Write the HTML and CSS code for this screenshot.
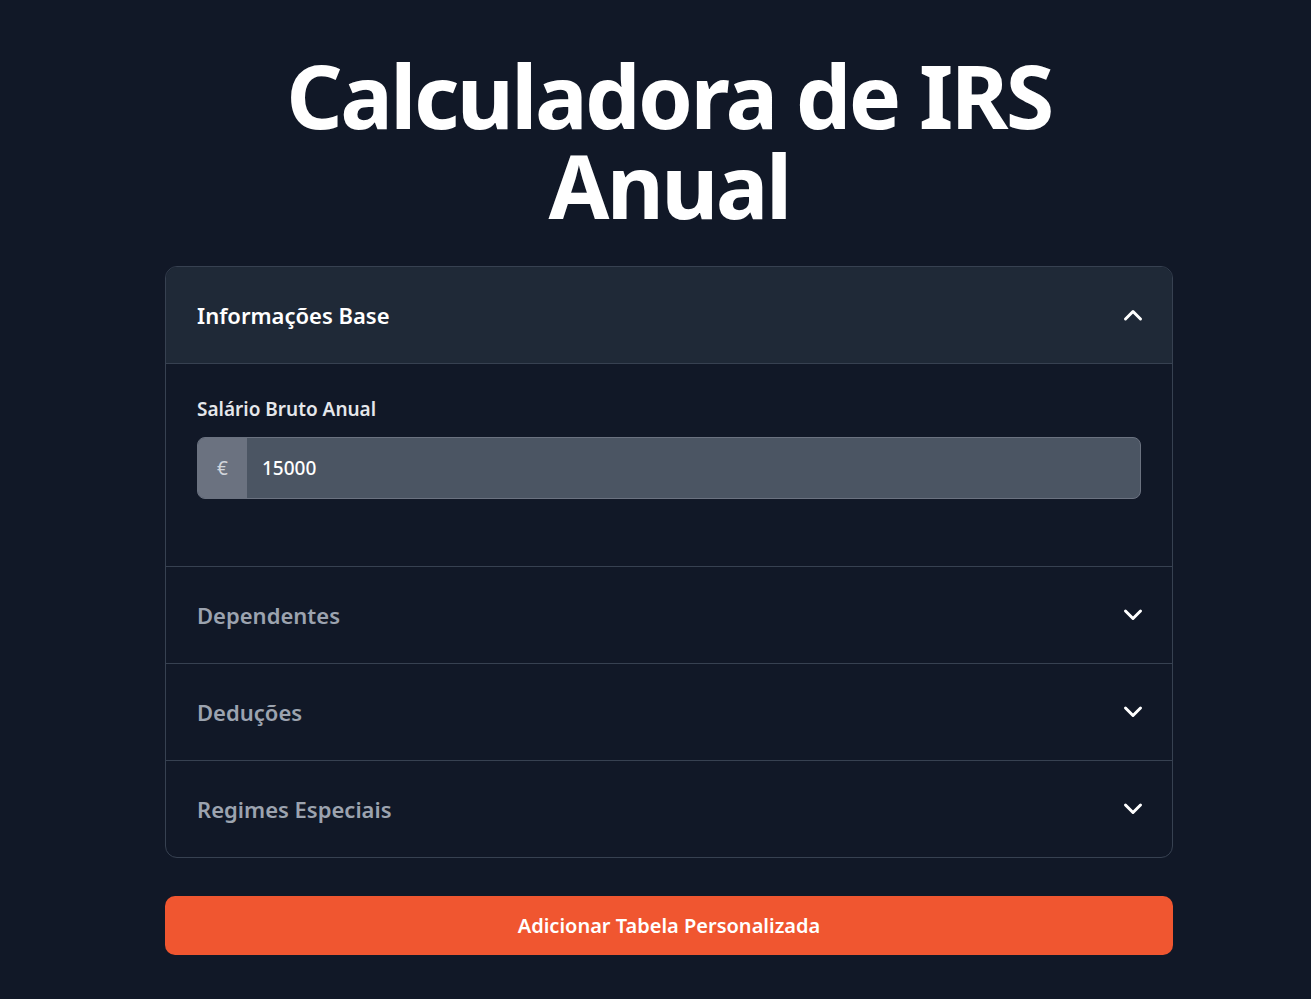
FILE: index.html
```html
<!DOCTYPE html>
<html lang="pt">
<head>
<meta charset="utf-8">
<title>Calculadora de IRS Anual</title>
<link rel="stylesheet" href="styles.css">
</head>
<body>
<main class="page">
  <h1 class="title">Calculadora de IRS<br>Anual</h1>
  <section class="accordion">
    <div class="acc-item open">
      <button class="acc-header">
        <span>Informações Base</span>
        <svg class="chev" viewBox="0 0 20 14" width="20" height="14"><path d="M2.5 11L10 3.5 17.5 11" fill="none" stroke="currentColor" stroke-width="3" stroke-linecap="round" stroke-linejoin="round"/></svg>
      </button>
      <div class="acc-body">
        <label class="field-label">Salário Bruto Anual</label>
        <div class="input-group">
          <span class="prefix">€</span>
          <span class="input">15000</span>
        </div>
      </div>
    </div>
    <div class="acc-item">
      <button class="acc-header">
        <span>Dependentes</span>
        <svg class="chev" viewBox="0 0 20 14" width="20" height="14"><path d="M2.5 3L10 10.5 17.5 3" fill="none" stroke="currentColor" stroke-width="3" stroke-linecap="round" stroke-linejoin="round"/></svg>
      </button>
    </div>
    <div class="acc-item">
      <button class="acc-header">
        <span>Deduções</span>
        <svg class="chev" viewBox="0 0 20 14" width="20" height="14"><path d="M2.5 3L10 10.5 17.5 3" fill="none" stroke="currentColor" stroke-width="3" stroke-linecap="round" stroke-linejoin="round"/></svg>
      </button>
    </div>
    <div class="acc-item">
      <button class="acc-header">
        <span>Regimes Especiais</span>
        <svg class="chev" viewBox="0 0 20 14" width="20" height="14"><path d="M2.5 3L10 10.5 17.5 3" fill="none" stroke="currentColor" stroke-width="3" stroke-linecap="round" stroke-linejoin="round"/></svg>
      </button>
    </div>
  </section>
  <button class="cta">Adicionar Tabela Personalizada</button>
</main>
</body>
</html>
```
FILE: styles.css
```css
* { box-sizing: border-box; }
html, body { margin: 0; padding: 0; background: #111827; }
body { font-family: "Noto Sans", "Open Sans", sans-serif; color: #fff; }
.page {
  width: 1008px;
  margin-left: 165px;
  padding-top: 50px;
  display: flex;
  flex-direction: column;
}
.title {
  margin: 0 0 36px;
  text-align: center;
  font-size: 88px;
  line-height: 90px;
  font-weight: 700;
  letter-spacing: -2.6px;
}
.accordion {
  border: 1px solid #374151;
  border-radius: 12px;
  overflow: hidden;
}
.acc-item + .acc-item { border-top: 1px solid #374151; }
.acc-header {
  width: 100%;
  height: 96px;
  display: flex;
  align-items: center;
  justify-content: space-between;
  padding: 0 29px 0 31px;
  background: transparent;
  border: 0;
  font-family: inherit;
  font-size: 22px;
  font-weight: 600;
  color: #9ca3af;
  text-align: left;
}
.acc-item.open .acc-header {
  background: #1f2937;
  color: #fff;
  border-bottom: 1px solid #374151;
  height: 97px;
}
.chev { color: #fff; }
.acc-body { padding: 32px 31px 67px; }
.field-label {
  display: block;
  font-size: 19px;
  font-weight: 600;
  color: #e5e7eb;
  margin-bottom: 15px;
}
.input-group {
  display: flex;
  height: 62px;
  border: 1px solid #6b7280;
  border-radius: 8px;
  overflow: hidden;
  background: #4b5563;
}
.prefix {
  width: 49px;
  display: flex;
  align-items: center;
  justify-content: center;
  background: #6b7280;
  color: #d1d5db;
  font-size: 19px;
}
.input {
  flex: 1;
  display: flex;
  align-items: center;
  padding-left: 15px;
  font-size: 19px;
  font-weight: 500;
  color: #fff;
}
.cta {
  margin-top: 38px;
  height: 59px;
  border: 0;
  border-radius: 10px;
  background: #f05630;
  color: #fff;
  font-family: inherit;
  font-size: 20px;
  font-weight: 600;
}
```
